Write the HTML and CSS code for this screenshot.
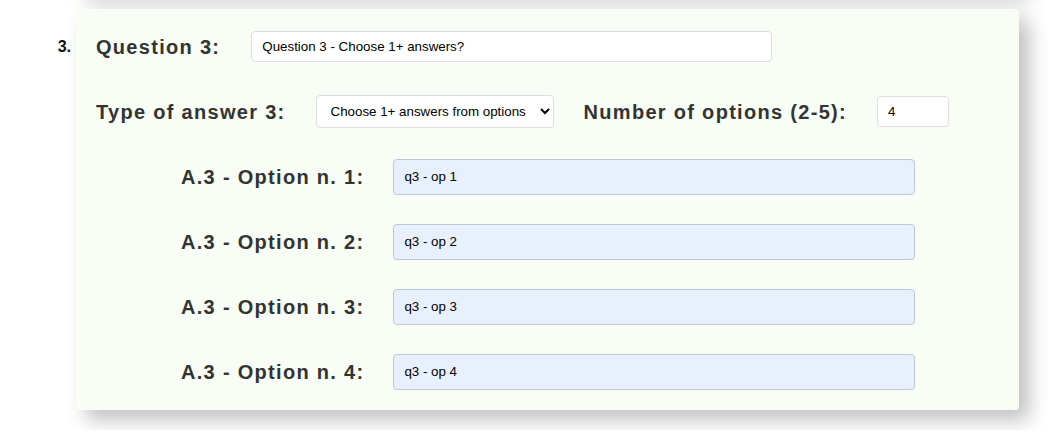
FILE: index.html
```html
<!DOCTYPE html>
<html lang="en">
<head>
<meta charset="utf-8">
<title>Quiz editor</title>
<link rel="stylesheet" href="styles.css">
</head>
<body>
<ol class="quiz">
  <li class="question question-prev">
    <span class="qnum">2.</span>
    <div class="card card-prev"></div>
  </li>
  <li class="question">
    <span class="qnum">3.</span>
    <div class="card">
      <div class="row">
        <label class="label" for="q3">Question 3:</label>
        <input class="field field-question" id="q3" type="text" value="Question 3 - Choose 1+ answers?">
      </div>
      <div class="row">
        <label class="label" for="t3">Type of answer 3:</label>
        <select class="field field-select" id="t3">
          <option>Choose 1+ answers from options</option>
        </select>
        <label class="label" for="n3">Number of options (2-5):</label>
        <input class="field field-number" id="n3" type="text" value="4">
      </div>
      <div class="row row-option">
        <label class="label" for="o31">A.3 - Option n. 1:</label>
        <input class="field field-option" id="o31" type="text" value="q3 - op 1">
      </div>
      <div class="row row-option">
        <label class="label" for="o32">A.3 - Option n. 2:</label>
        <input class="field field-option" id="o32" type="text" value="q3 - op 2">
      </div>
      <div class="row row-option">
        <label class="label" for="o33">A.3 - Option n. 3:</label>
        <input class="field field-option" id="o33" type="text" value="q3 - op 3">
      </div>
      <div class="row row-option">
        <label class="label" for="o34">A.3 - Option n. 4:</label>
        <input class="field field-option" id="o34" type="text" value="q3 - op 4" autofocus>
      </div>
    </div>
  </li>
</ol>
</body>
</html>
```

FILE: styles.css
```css
html, body {
  margin: 0;
  padding: 0;
  background: #ffffff;
}

body {
  font-family: "Liberation Sans", Arial, sans-serif;
  color: #333333;
  overflow: hidden;
}

.quiz {
  list-style: none;
  margin: -71px 0 0 0;
  padding: 0;
}

.question {
  display: flex;
  align-items: flex-start;
  margin-bottom: 20px;
}

.qnum {
  flex: 0 0 76px;
  box-sizing: border-box;
  padding-right: 5px;
  padding-top: 29px;
  text-align: right;
  font-size: 16px;
  font-weight: bold;
  color: #111111;
}

.card {
  box-sizing: border-box;
  width: 943px;
  padding: 5px 20px 6px;
  background: #f8fef5;
  border-radius: 4px;
  box-shadow: 10px 10px 20px rgba(0, 0, 0, 0.25);
}

.card-prev {
  height: 60px;
}

.question-prev .qnum {
  visibility: hidden;
}

.row {
  display: flex;
  align-items: center;
  gap: 30px;
  height: 65px;
}

.row-option {
  padding-left: 85px;
  gap: 29px;
}

.label {
  padding-top: 2px;
  font-size: 20px;
  font-weight: bold;
  letter-spacing: 1.3px;
  color: #333333;
  white-space: nowrap;
}

.field {
  box-sizing: border-box;
  font-family: "Liberation Sans", Arial, sans-serif;
  font-size: 13.33px;
  color: #000000;
  background: #ffffff;
  border: 1px solid #dddddd;
  border-radius: 4px;
  padding: 0 10px;
  margin: 0;
}

.field:focus {
  outline: none;
}

.field-question {
  width: 521px;
  height: 31px;
  margin-left: 1px;
}

.field-select {
  height: 33px;
  margin-top: -1px;
}

.field-number {
  width: 72px;
  height: 31px;
}

.field-option {
  width: 522px;
  height: 36px;
  background: #e8f0fe;
  border-color: #bcc7d8;
}
```
